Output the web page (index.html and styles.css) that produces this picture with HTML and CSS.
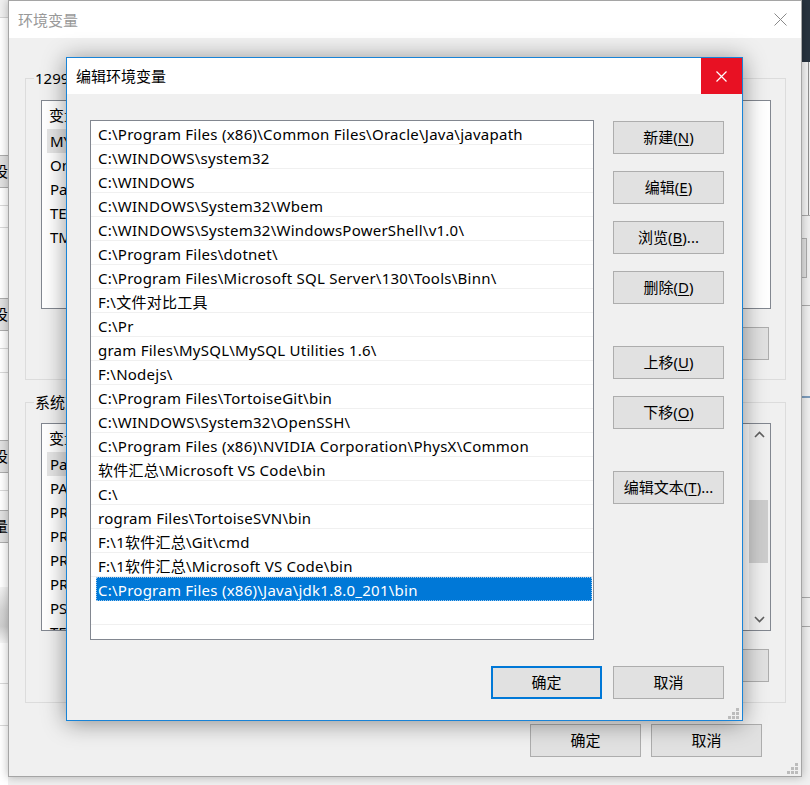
FILE: index.html
```html
<!DOCTYPE html>
<html lang="zh-CN">
<head>
<meta charset="utf-8">
<title>编辑环境变量</title>
<link rel="stylesheet" href="styles.css">
</head>
<body>
<div class="win win-left">
  <div class="ls-top"></div>
  <div class="ls-gap g1"></div>
  <div class="ls-btn"><span class="ls-txt">设置</span></div>
  <div class="ls-gap g2"></div>
  <div class="ls-line"></div>
  <div class="ls-gap g3"></div>
  <div class="ls-line"></div>
  <div class="ls-gap g4"></div>
  <div class="ls-btn"><span class="ls-txt">设置</span></div>
  <div class="ls-gap g5"></div>
  <div class="ls-line"></div>
  <div class="ls-gap g6"></div>
  <div class="ls-line"></div>
  <div class="ls-gap g7"></div>
  <div class="ls-btn"><span class="ls-txt">设置</span></div>
  <div class="ls-gap g8"></div>
  <div class="ls-line"></div>
  <div class="ls-gap g9"></div>
  <div class="ls-btn"><span class="ls-txt">量</span></div>
  <div class="ls-gap g10"></div>
  <div class="ls-shadow"></div>
  <div class="ls-gap g11"></div>
  <div class="ls-line"></div>
  <div class="ls-gap g12"></div>
  <div class="ls-line"></div>
</div>

<div class="win win-right">
  <div class="rs-dark"></div>
  <div class="rs-panel"></div>
  <div class="rs-line"></div>
  <div class="rs-gap a"></div>
  <div class="rs-btn"></div>
  <div class="rs-gap b"></div>
  <div class="rs-line"></div>
  <div class="rs-gap c"></div>
  <div class="rs-line blue"></div>
  <div class="rs-gap d"></div>
  <div class="rs-line"></div>
  <div class="rs-gap e"></div>
  <div class="rs-line"></div>
</div>

<div class="win win-main">
  <div class="titlebar">
    <span class="title inactive">环境变量</span>
    <svg class="x-main" width="13" height="13" viewBox="0 0 13 13"><path d="M0.5 0.5L12.5 12.5M12.5 0.5L0.5 12.5" stroke="#8a8a8a" stroke-width="1" fill="none"/></svg>
  </div>
  <div class="main-body">
    <div class="group grp-user">
      <span class="legend">12990 的用户变量(<u>U</u>)</span>
      <div class="lv lv-user">
        <div class="lv-rows">
          <div class="lv-head"><span class="lv-txt">变量</span></div>
          <div class="lv-row sel"><span class="lv-cell">MYSQL_HOME</span></div>
          <div class="lv-row"><span class="lv-cell">OneDrive</span></div>
          <div class="lv-row"><span class="lv-cell">Path</span></div>
          <div class="lv-row"><span class="lv-cell">TEMP</span></div>
          <div class="lv-row"><span class="lv-cell">TMP</span></div>
        </div>
      </div>
      <div class="btnrow">
        <div class="btn"></div>
        <div class="btn"></div>
        <div class="btn"></div>
      </div>
    </div>
    <div class="group grp-sys">
      <span class="legend">系统变量(<u>S</u>)</span>
      <div class="lv lv-sys">
        <div class="lv-rows">
          <div class="lv-head"><span class="lv-txt">变量</span></div>
          <div class="lv-row sel"><span class="lv-cell">Path</span></div>
          <div class="lv-row"><span class="lv-cell">PATHEXT</span></div>
          <div class="lv-row"><span class="lv-cell">PROCESSOR_ARCHITECTURE</span></div>
          <div class="lv-row"><span class="lv-cell">PROCESSOR_IDENTIFIER</span></div>
          <div class="lv-row"><span class="lv-cell">PROCESSOR_LEVEL</span></div>
          <div class="lv-row"><span class="lv-cell">PROCESSOR_REVISION</span></div>
          <div class="lv-row"><span class="lv-cell">PSModulePath</span></div>
          <div class="lv-row"><span class="lv-cell">TEMP</span></div>
        </div>
        <div class="vscroll">
          <div class="arrow">
            <svg width="11" height="7" viewBox="0 0 11 7"><path d="M1 6L5.5 1.5L10 6" stroke="#606060" stroke-width="1.6" fill="none"/></svg>
          </div>
          <div class="track"><div class="thumb"></div></div>
          <div class="arrow">
            <svg width="11" height="7" viewBox="0 0 11 7"><path d="M1 1L5.5 5.5L10 1" stroke="#606060" stroke-width="1.6" fill="none"/></svg>
          </div>
        </div>
      </div>
      <div class="btnrow">
        <div class="btn"></div>
        <div class="btn"></div>
        <div class="btn"></div>
      </div>
    </div>
    <div class="btnrow bottom">
      <button class="btn">确定</button>
      <button class="btn">取消</button>
    </div>
  </div>
  <svg class="grip grip-main" width="11" height="11" viewBox="0 0 11 11"><g fill="#bcbcbc"><rect x="8" y="0" width="3" height="3"/><rect x="4" y="4" width="3" height="3"/><rect x="8" y="4" width="3" height="3"/><rect x="0" y="8" width="3" height="3"/><rect x="4" y="8" width="3" height="3"/><rect x="8" y="8" width="3" height="3"/></g></svg>
</div>

<div class="win dialog">
  <div class="titlebar dlg-title">
    <span class="title">编辑环境变量</span>
    <div class="x-red">
      <svg width="11" height="11" viewBox="0 0 11 11"><path d="M0.5 0.5L10.5 10.5M10.5 0.5L0.5 10.5" stroke="#fff" stroke-width="1.2" fill="none"/></svg>
    </div>
  </div>
  <div class="dlg-body">
    <div class="dlist">
      <div class="drow"><span class="dcell">C:\Program Files (x86)\Common Files\Oracle\Java\javapath</span></div>
      <div class="drow"><span class="dcell">C:\WINDOWS\system32</span></div>
      <div class="drow"><span class="dcell">C:\WINDOWS</span></div>
      <div class="drow"><span class="dcell">C:\WINDOWS\System32\Wbem</span></div>
      <div class="drow"><span class="dcell">C:\WINDOWS\System32\WindowsPowerShell\v1.0\</span></div>
      <div class="drow"><span class="dcell">C:\Program Files\dotnet\</span></div>
      <div class="drow"><span class="dcell">C:\Program Files\Microsoft SQL Server\130\Tools\Binn\</span></div>
      <div class="drow"><span class="dcell">F:\文件对比工具</span></div>
      <div class="drow"><span class="dcell">C:\Pr</span></div>
      <div class="drow"><span class="dcell">gram Files\MySQL\MySQL Utilities 1.6\</span></div>
      <div class="drow"><span class="dcell">F:\Nodejs\</span></div>
      <div class="drow"><span class="dcell">C:\Program Files\TortoiseGit\bin</span></div>
      <div class="drow"><span class="dcell">C:\WINDOWS\System32\OpenSSH\</span></div>
      <div class="drow"><span class="dcell">C:\Program Files (x86)\NVIDIA Corporation\PhysX\Common</span></div>
      <div class="drow"><span class="dcell">软件汇总\Microsoft VS Code\bin</span></div>
      <div class="drow"><span class="dcell">C:\</span></div>
      <div class="drow"><span class="dcell">rogram Files\TortoiseSVN\bin</span></div>
      <div class="drow"><span class="dcell">F:\1软件汇总\Git\cmd</span></div>
      <div class="drow"><span class="dcell">F:\1软件汇总\Microsoft VS Code\bin</span></div>
      <div class="drow sel"><span class="dcell">C:\Program Files (x86)\Java\jdk1.8.0_201\bin</span></div>
      <div class="drow"><span class="dcell"></span></div>
    </div>
    <div class="dbtns">
      <button class="btn b-new">新建(<u>N</u>)</button>
      <button class="btn">编辑(<u>E</u>)</button>
      <button class="btn">浏览(<u>B</u>)...</button>
      <button class="btn">删除(<u>D</u>)</button>
      <button class="btn gap-big">上移(<u>U</u>)</button>
      <button class="btn">下移(<u>O</u>)</button>
      <button class="btn gap-big">编辑文本(<u>T</u>)...</button>
    </div>
    <div class="dfoot">
      <button class="btn default">确定</button>
      <button class="btn">取消</button>
    </div>
  </div>
  <svg class="grip grip-dlg" width="11" height="11" viewBox="0 0 11 11"><g fill="#bcbcbc"><rect x="8" y="0" width="3" height="3"/><rect x="4" y="4" width="3" height="3"/><rect x="8" y="4" width="3" height="3"/><rect x="0" y="8" width="3" height="3"/><rect x="4" y="8" width="3" height="3"/><rect x="8" y="8" width="3" height="3"/></g></svg>
</div>
</body>
</html>
```

FILE: styles.css
```css
* { box-sizing: border-box; }

html, body {
  margin: 0;
  padding: 0;
}

body {
  width: 810px;
  height: 785px;
  overflow: hidden;
  position: relative;
  background: #f0f0f0;
  font-family: "Noto Sans", "Noto Sans CJK SC", sans-serif;
  font-size: 15px;
  color: #000;
}

u { text-decoration: underline; text-underline-offset: 2px; }

.win { position: absolute; }

/* ---------- window behind, left edge ---------- */
.win-left {
  left: -192px;
  top: 0;
  width: 200px;
  height: 785px;
  background: #ffffff;
  display: flex;
  flex-direction: column;
  overflow: hidden;
}
.ls-top { height: 18px; background: #f0f0f0; border-bottom: 1px solid #d4d4d4; flex: none; }
.ls-gap { flex: none; }
.ls-gap.g1 { height: 137px; }
.ls-gap.g2 { height: 17px; }
.ls-gap.g3 { height: 21px; }
.ls-gap.g4 { height: 70px; }
.ls-gap.g5 { height: 17px; }
.ls-gap.g6 { height: 23px; }
.ls-gap.g7 { height: 67px; }
.ls-gap.g8 { height: 17px; }
.ls-gap.g9 { height: 19px; }
.ls-gap.g10 { height: 44px; }
.ls-gap.g11 { height: 40px; }
.ls-gap.g12 { height: 41px; }
.ls-line { height: 1px; background: #d9d9d9; flex: none; }
.ls-btn {
  flex: none;
  height: 33px;
  background: #e1e1e1;
  border: 1px solid #adadad;
  border-right: none;
  display: flex;
  justify-content: flex-end;
  overflow: hidden;
}
/* only the right half of the first glyph shows left of the main window */
.ls-txt {
  flex: none;
  width: 8px;
  overflow: hidden;
  text-indent: -7px;
  white-space: nowrap;
  line-height: 31px;
}
.ls-shadow {
  flex: none;
  height: 56px;
  background: linear-gradient(#f3f3f3, #d6d6d6 40%, #cfcfcf 70%, #f6f6f6);
}

/* ---------- window behind, right edge ---------- */
.win-right {
  left: 802px;
  top: 0;
  width: 60px;
  height: 785px;
  background: #f0f0f0;
  display: flex;
  flex-direction: column;
}
.rs-dark { height: 62px; background: #28343f; flex: none; }
.rs-panel { height: 153px; flex: none; width: 7px; border-right: 1px solid #8d8d8d; background: #f4f4f4; }
.rs-line { height: 1px; background: #a9a9a9; flex: none; }
.rs-line.blue { background: #7c9cbc; height: 2px; }
.rs-gap { flex: none; }
.rs-gap.a { height: 22px; }
.rs-gap.b { height: 27px; }
.rs-gap.c { height: 90px; }
.rs-gap.d { height: 199px; }
.rs-gap.e { height: 28px; }
.rs-btn { height: 40px; width: 5px; background: #e1e1e1; border: 1px solid #adadad; border-left: none; flex: none; }

/* ---------- main window 环境变量 ---------- */
.win-main {
  left: 8px;
  top: 0;
  width: 794px;
  height: 777px;
  border: 1px solid #a5a5a5;
  background: #f0f0f0;
  box-shadow: 0 0 9px rgba(0, 0, 0, 0.28);
  display: flex;
  flex-direction: column;
}
.titlebar {
  flex: none;
  height: 37px;
  background: #fff;
  display: flex;
  align-items: center;
  padding-left: 9px;
}
.title { line-height: 20px; white-space: nowrap; }
.title.inactive { color: #999; }
.x-main { margin-left: auto; margin-right: 14px; }

.main-body {
  flex: 1;
  padding: 40px 15px 19px 16px;
  display: flex;
  flex-direction: column;
}

.group {
  position: relative;
  flex: none;
  border: 1px solid #dcdcdc;
  padding: 0 14px 0 15px;
}
.grp-user { height: 302px; padding-top: 21px; }
.grp-sys { height: 301px; padding-top: 20px; margin-top: 22px; }

/* group captions: only the part left of the dialog is visible */
.legend {
  position: absolute;
  top: -11px;
  left: 8px;
  width: 32px;
  overflow: hidden;
  padding: 0 1px;
  background: #f0f0f0;
  line-height: 20px;
  white-space: nowrap;
}

.lv {
  background: #fff;
  border: 1px solid #828790;
  display: flex;
  overflow: hidden;
}
.lv-user { height: 209px; }
.lv-sys { height: 208px; }
.lv-rows { flex: 1; min-width: 0; }
.lv-head { height: 28px; line-height: 28px; padding-left: 7px; }
.lv-txt { display: block; width: 17px; overflow: hidden; white-space: nowrap; }
.lv-row { height: 24px; line-height: 24px; padding-left: 5px; }
.lv-cell {
  display: block;
  width: 19px;
  padding-left: 3px;
  white-space: nowrap;
  overflow: hidden;
}
.lv-row.sel .lv-cell { background: #e5e5e5; }

.vscroll {
  flex: none;
  width: 21px;
  background: #f0f0f0;
  display: flex;
  flex-direction: column;
}
.arrow {
  flex: none;
  height: 21px;
  display: flex;
  align-items: center;
  justify-content: center;
}
.track { flex: 1; padding-top: 55px; }
.thumb { height: 63px; margin: 0 2px 0 0; background: #cdcdcd; }

.btnrow {
  display: flex;
  justify-content: flex-end;
  gap: 10px;
  margin-top: 18px;
  padding-right: 2px;
}
.btnrow.bottom { margin-top: 21px; padding-right: 24px; }

.btn {
  flex: none;
  width: 111px;
  height: 33px;
  padding: 0;
  margin: 0;
  background: #e1e1e1;
  border: 1px solid #adadad;
  border-radius: 0;
  font: inherit;
  color: #000;
  line-height: 31px;
  text-align: center;
  white-space: nowrap;
}
.btn.default { border: 2px solid #0078d7; line-height: 29px; }

.grip { position: absolute; }
.grip-main { right: 3px; bottom: 2px; }

/* ---------- dialog 编辑环境变量 ---------- */
.dialog {
  left: 66px;
  top: 57px;
  width: 677px;
  height: 664px;
  border: 1px solid #1883d7;
  background: #f0f0f0;
  box-shadow: 0 2px 22px rgba(0, 0, 0, 0.42);
  display: flex;
  flex-direction: column;
}
.dlg-title { height: 36px; }
.x-red {
  margin-left: auto;
  width: 41px;
  height: 36px;
  background: #e81123;
  display: flex;
  align-items: center;
  justify-content: center;
}

.dlg-body {
  flex: 1;
  padding: 26px 18px 21px 23px;
  display: grid;
  grid-template-columns: 504px 111px;
  grid-template-rows: 520px 33px;
  column-gap: 19px;
  row-gap: 26px;
}

.dlist {
  background: #fff;
  border: 1px solid #828790;
  overflow: hidden;
}
.drow {
  height: 24px;
  border-bottom: 1px solid #f0f0f0;
}
.dcell {
  display: block;
  height: 24px;
  margin: 0 1px 0 5px;
  padding: 3px 0 0 2px;
  line-height: 20px;
  letter-spacing: 0.25px;
  white-space: nowrap;
  overflow: hidden;
}
.drow.sel { border-bottom-color: transparent; }
.drow.sel .dcell {
  background: #0078d7;
  color: #fff;
  outline: 1px dotted #9fc9ee;
  outline-offset: -1px;
}

.dbtns {
  display: flex;
  flex-direction: column;
  gap: 17px;
  padding-top: 1px;
}
.dbtns .gap-big { margin-top: 25px; }

.dfoot {
  grid-column: 1 / 3;
  display: flex;
  justify-content: flex-end;
  gap: 11px;
}

.grip-dlg { right: 3px; bottom: 1px; }
```
